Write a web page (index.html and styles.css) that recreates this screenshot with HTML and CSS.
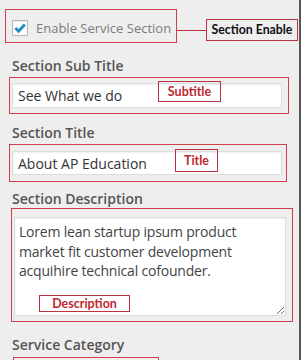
FILE: index.html
```html
<!DOCTYPE html>
<html>
<head>
<meta charset="utf-8">
<link rel="stylesheet" href="styles.css">
</head>
<body>
<div class="panel">
  <div class="enable-row">
    <div class="enable-box">
      <span class="checkbox">
        <svg width="14" height="14" viewBox="0 0 14 14"><path d="M2.4 7.1 L5.6 10.3 L11.8 3.5" fill="none" stroke="#1e8cbe" stroke-width="2.8" stroke-linecap="butt" stroke-linejoin="miter"/></svg>
      </span>
      <span class="enable-text">Enable Service Section</span>
    </div>
    <span class="connector"></span>
    <span class="tag-black">Section Enable</span>
  </div>

  <div class="label l1">Section Sub Title</div>
  <div class="field f1">
    <input class="input i1" type="text" value="See What we do">
    <span class="tag tag-sub">Subtitle</span>
  </div>

  <div class="label l2">Section Title</div>
  <div class="field f2">
    <input class="input i2" type="text" value="About AP Education">
    <span class="tag tag-title">Title</span>
  </div>

  <div class="label l3">Section Description</div>
  <div class="field f3">
    <textarea class="textarea">Lorem lean startup ipsum product
market fit customer development
acquihire technical cofounder.</textarea>
    <span class="tag tag-desc">Description</span>
  </div>

  <div class="label l4">Service Category</div>
  <div class="field f4"></div>
</div>
</body>
</html>
```
FILE: styles.css
```css
html, body {
  margin: 0;
  padding: 0;
}
body {
  background: #eeeeee;
  width: 301px;
  height: 360px;
  overflow: hidden;
  font-family: "Open Sans", "Noto Sans", sans-serif;
}
.panel {
  width: 301px;
  height: 360px;
  box-sizing: border-box;
  border-right: 2px solid #555555;
  padding-top: 9px;
  overflow: hidden;
}
.enable-row {
  display: flex;
  align-items: center;
  height: 34px;
}
.enable-box {
  margin-left: 5px;
  width: 172px;
  height: 34px;
  box-sizing: border-box;
  border: 1px solid #cf3f4a;
  display: flex;
  align-items: center;
  padding-left: 6px;
  padding-top: 3px;
}
.checkbox {
  width: 16px;
  height: 16px;
  box-sizing: border-box;
  border: 1px solid #b4b9be;
  background: #fff;
  box-shadow: inset 0 1px 2px rgba(0,0,0,.1);
  display: flex;
  align-items: center;
  justify-content: center;
}
.enable-text {
  margin-left: 8px;
  font-size: 13px;
  color: #7b7b7b;
  white-space: nowrap;
}
.connector {
  width: 29px;
  height: 1px;
  background: #b83240;
  margin-top: 8px;
}
.tag-black {
  width: 92px;
  height: 22px;
  box-sizing: border-box;
  border: 1px solid #b83240;
  margin-top: 8px;
  font: bold 12.3px/20px Lato, "Liberation Sans", sans-serif;
  color: #111;
  text-align: center;
  white-space: nowrap;
}
.label {
  font-size: 14px;
  font-weight: 600;
  line-height: 20px;
  color: #555;
  margin-left: 12px;
}
.l1 { margin-top: 13px; }
.l2 { margin-top: 9px; }
.l3 { margin-top: 7px; }
.l4 { margin-top: 13px; }
.field {
  position: relative;
  box-sizing: border-box;
  border: 1px solid #cf3f4a;
}
.f1 {
  margin: 1px 0 0 9px;
  width: 280px;
  padding: 5px 6px 5px 2px;
}
.f2 {
  margin: 1px 0 0 9px;
  width: 278px;
  padding: 6px 4px 6px 2px;
}
.f3 {
  margin: -1px 0 0 11px;
  width: 282px;
  padding: 8px 6px 5px 2px;
}
.f4 {
  margin: 2px 0 0 13px;
  width: 146px;
  height: 30px;
}
.input {
  display: block;
  width: 270px;
  box-sizing: border-box;
  border: 1px solid #dddddd;
  background: #fff;
  box-shadow: inset 0 1px 2px rgba(0,0,0,.07);
  font-family: "Open Sans", "Noto Sans", sans-serif;
  font-size: 14px;
  color: #333;
  padding: 0 5px;
  margin: 0;
  outline: none;
}
.i1 { height: 25px; }
.i2 { height: 24px; }
.textarea {
  display: block;
  width: 272px;
  height: 99px;
  box-sizing: border-box;
  border: 1px solid #dddddd;
  background: #fff;
  box-shadow: inset 0 1px 2px rgba(0,0,0,.07);
  font-family: "Open Sans", "Noto Sans", sans-serif;
  font-size: 14px;
  letter-spacing: -0.2px;
  line-height: 19.5px;
  color: #444;
  padding: 4px 4px;
  margin: 0;
  resize: both;
  overflow: hidden;
  white-space: pre;
  outline: none;
}
.tag {
  position: absolute;
  box-sizing: border-box;
  border: 1px solid #b83240;
  font-family: Lato, "Liberation Sans", sans-serif;
  font-weight: bold;
  font-size: 12.5px;
  color: #c0282f;
  text-align: center;
  display: flex;
  align-items: center;
  justify-content: center;
}
.tag-sub { left: 148px; top: 3px; width: 63px; height: 21px; }
.tag-title { left: 165px; top: 4px; width: 43px; height: 23px; }
.tag-desc { left: 27px; top: 86px; width: 91px; height: 17px; }
```
